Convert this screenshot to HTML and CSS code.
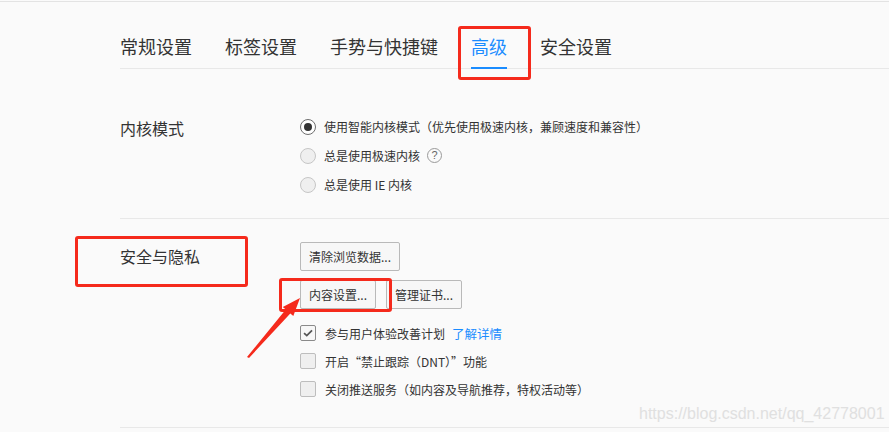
FILE: index.html
```html
<!DOCTYPE html>
<html lang="zh-CN">
<head>
<meta charset="utf-8">
<title>高级设置</title>
<link rel="stylesheet" href="styles.css">
</head>
<body>
<div class="page">
  <nav class="tabs">
    <a class="tab">常规设置</a>
    <a class="tab">标签设置</a>
    <a class="tab">手势与快捷键</a>
    <a class="tab active">高级</a>
    <a class="tab">安全设置</a>
  </nav>

  <section class="section kernel">
    <div class="label">内核模式</div>
    <div class="options">
      <div class="opt"><span class="radio on"></span><span>使用智能内核模式（优先使用极速内核，兼顾速度和兼容性）</span></div>
      <div class="opt"><span class="radio"></span><span>总是使用极速内核</span><span class="help">?</span></div>
      <div class="opt"><span class="radio"></span><span>总是使用 IE 内核</span></div>
    </div>
  </section>

  <section class="section privacy">
    <div class="label">安全与隐私</div>
    <div class="options">
      <div class="btn-row"><button class="btn">清除浏览数据...</button></div>
      <div class="btn-row"><button class="btn">内容设置...</button><button class="btn">管理证书...</button></div>
      <div class="checks">
        <div class="chk-row"><span class="box on"><svg viewBox="0 0 16 16" width="14" height="14"><path d="M3.5 8.2 L6.6 11 L12.6 5" fill="none" stroke="#555" stroke-width="2"/></svg></span><span>参与用户体验改善计划</span><a class="link">了解详情</a></div>
        <div class="chk-row"><span class="box"></span><span>开启“禁止跟踪（DNT）”功能</span></div>
        <div class="chk-row"><span class="box"></span><span>关闭推送服务（如内容及导航推荐，特权活动等）</span></div>
      </div>
    </div>
  </section>
</div>

<div class="watermark">https://blog.csdn.net/qq_42778001</div>

<div class="mark mark-tab"></div>
<div class="mark mark-label"></div>
<div class="mark mark-btn"></div>
<svg class="arrow" viewBox="0 0 70 75" width="70" height="75">
  <polygon points="7,67 45.8,19.5 42.8,16.9 60,8 53.3,26.1 50.3,23.5 9,68" fill="#f52a1c"/>
</svg>
</body>
</html>
```

FILE: styles.css
```css
html, body {
  margin: 0;
  padding: 0;
}

body {
  background: #fafafa;
  font-family: "Noto Sans CJK SC", "Noto Sans", sans-serif;
  color: #333;
  overflow: hidden;
}

.page {
  margin-top: 1px;
  border-top: 1px solid #e3e3e3;
}

.tabs {
  display: flex;
  gap: 33px;
  margin-left: 120px;
  padding-top: 32px;
  border-bottom: 1px solid #e8e8e8;
}

.tab {
  font-size: 18px;
  line-height: 24px;
  padding-bottom: 9px;
  border-bottom: 2px solid transparent;
  margin-bottom: -1px;
  color: #333;
}

.tab.active {
  color: #1a8cff;
  border-bottom-color: #1a8cff;
}

.section {
  display: flex;
  margin-left: 120px;
}

.kernel {
  padding: 43px 0 19px;
}

.privacy {
  border-top: 1px solid #e8e8e8;
  border-bottom: 1px solid #e8e8e8;
  padding: 23px 0 24px;
}

.label {
  flex: none;
  width: 180px;
  font-size: 16px;
  line-height: 29px;
  color: #333;
}

.kernel .label {
  padding-top: 2px;
}

.opt {
  display: flex;
  align-items: center;
  gap: 8px;
  height: 29px;
  font-size: 12px;
  color: #333;
}

.radio {
  flex: none;
  width: 16px;
  height: 16px;
  box-sizing: border-box;
  border: 1px solid #c6c6c6;
  border-radius: 50%;
  background: #efefef;
}

.radio.on {
  display: grid;
  place-items: center;
  border-color: #6e6e6e;
  background: #fff;
}

.radio.on::after {
  content: "";
  width: 8px;
  height: 8px;
  border-radius: 50%;
  background: #333;
}

.help {
  display: grid;
  place-items: center;
  width: 15px;
  height: 15px;
  box-sizing: border-box;
  border: 1px solid #9a9a9a;
  border-radius: 50%;
  font-family: "Liberation Sans", sans-serif;
  font-size: 11px;
  line-height: 1;
  color: #666;
  margin-left: -1px;
}

.btn-row {
  display: flex;
  gap: 10px;
}

.btn-row + .btn-row {
  margin-top: 9px;
}

.btn {
  height: 29px;
  box-sizing: border-box;
  padding: 0 8px;
  border: 1px solid #b9b9b9;
  border-radius: 2px;
  background: #f7f7f7;
  font-family: "Noto Sans CJK SC", "Noto Sans", sans-serif;
  font-size: 12px;
  color: #333;
}

.checks {
  margin-top: 10px;
}

.chk-row {
  display: flex;
  align-items: center;
  gap: 9px;
  height: 28px;
  font-size: 12px;
  color: #333;
}

.box {
  flex: none;
  display: grid;
  place-items: center;
  width: 16px;
  height: 16px;
  box-sizing: border-box;
  border: 1px solid #bdbdbd;
  border-radius: 2px;
  background: #efefef;
}

.box.on {
  border-color: #8a8a8a;
  background: #f7f7f7;
}

.link {
  color: #1a8cff;
  font-size: 12.5px;
  margin-left: -2px;
}

.watermark {
  position: absolute;
  left: 639px;
  top: 406px;
  font-family: "Liberation Sans", Arial, sans-serif;
  font-size: 16px;
  line-height: 16px;
  color: #e0e0e0;
}

.mark {
  position: absolute;
  box-sizing: border-box;
  border: 3px solid #f52a1c;
  border-radius: 3px;
}

.mark-tab {
  left: 458px;
  top: 26px;
  width: 73px;
  height: 54px;
}

.mark-label {
  left: 75px;
  top: 236px;
  width: 173px;
  height: 51px;
}

.mark-btn {
  left: 279px;
  top: 278px;
  width: 113px;
  height: 34px;
}

.arrow {
  position: absolute;
  left: 240px;
  top: 290px;
}
```
